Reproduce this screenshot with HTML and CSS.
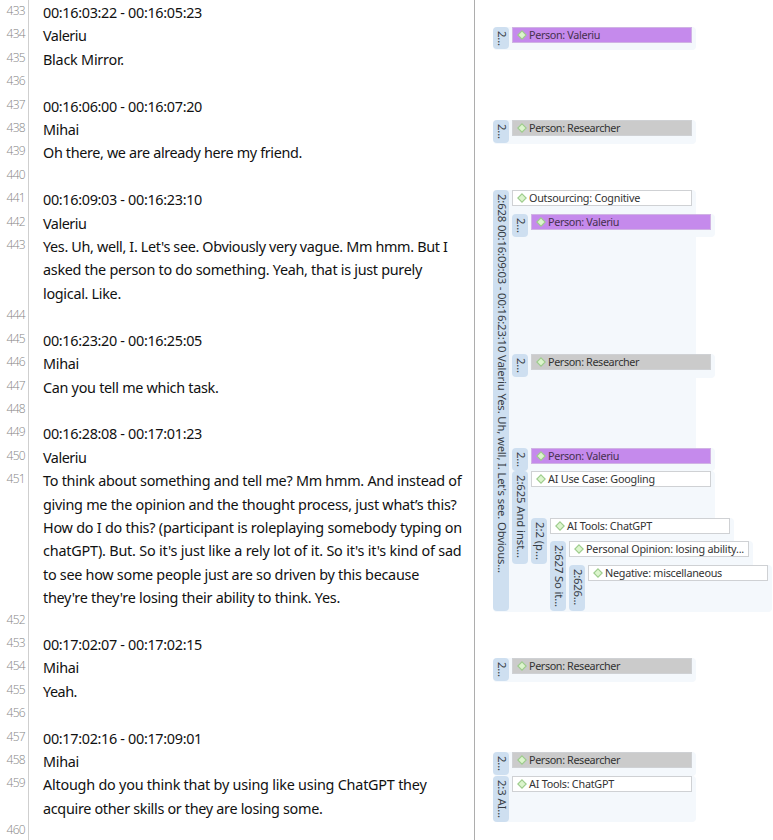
FILE: index.html
```html
<!DOCTYPE html>
<html lang="en">
<head>
<meta charset="utf-8">
<title>Transcript</title>
<link rel="stylesheet" href="styles.css">
</head>
<body>
<main class="document">
  <section class="transcript" id="transcript"></section>
  <aside class="margin" id="margin"></aside>
</main>
<script src="app.js"></script>
</body>
</html>
```
FILE: styles.css
```css
* { box-sizing: border-box; }
body {
  margin: 0;
  background: #fff;
  color: #111;
  font-family: "Noto Sans", "Open Sans", sans-serif;
  overflow: hidden;
}
.document {
  --line: 23.42px;
  display: grid;
  grid-template-columns: 475px 1fr;
  height: 840px;
  overflow: hidden;
}
.transcript {
  border-right: 1px solid #adadad;
  display: flex;
  flex-direction: column;
}
.paragraph {
  display: grid;
  grid-template-columns: 29px 1fr;
  flex: none;
}
.number {
  height: 100%;
  border-right: 1px solid #cfcfcf;
  padding-right: 3px;
  text-align: right;
  color: #868686;
  font-family: "Open Sans", "Noto Sans", sans-serif;
  font-weight: 300;
  font-size: 12px;
  line-height: 22.6px;
}
.text {
  padding-left: 14px;
  font-size: 14.4px;
}
.line {
  height: var(--line);
  line-height: 25.4px;
  white-space: nowrap;
}
.paragraph:last-child { height: 21px; }
.margin {
  display: grid;
  grid-template-rows: repeat(36, var(--line));
  grid-template-columns: 1fr;
  padding: 3.1px 0 0 18px;
}
.quote {
  grid-column: 1;
  display: flex;
  gap: 3px;
  width: 203px;
  background: #f4f8fc;
  border-radius: 4px;
}
.level-1 { margin-left: 19px; }
.level-2 { margin-left: 38px; }
.level-3 { margin-left: 57px; }
.level-4 { margin-left: 76px; }
.chip {
  width: 16px;
  height: calc(100% - 0.6px);
  border-radius: 4px;
  background: #cedff0;
  padding-top: 4px;
  writing-mode: vertical-rl;
  font-size: 11.3px;
  line-height: 14px;
  white-space: nowrap;
  color: #363c44;
}
.tag {
  display: flex;
  align-items: center;
  width: 180px;
  height: 16px;
  padding-left: 4px;
  border: 1px solid #cfd1d4;
  background: #fff;
  color: #333;
  font-size: 10.8px;
  line-height: 14px;
  white-space: nowrap;
}
.tag.valeriu { background: #c58aec; border-color: #d0b3e4; color: #46314f; }
.tag.researcher { background: #cbcbcb; }
.tag svg { width: 10px; height: 10px; margin-right: 2px; flex: none; }
```
FILE: app.js
```js
// Each paragraph: lines of [text, set width in px]
const paragraphs = [
  [["00:16:03:22 - 00:16:05:23", 159]],
  [["Valeriu", 43.5]],
  [["Black Mirror.", 81]],
  [],
  [["00:16:06:00 - 00:16:07:20", 159]],
  [["Mihai", 36]],
  [["Oh there, we are already here my friend.", 259]],
  [],
  [["00:16:09:03 - 00:16:23:10", 159]],
  [["Valeriu", 43.5]],
  [["Yes. Uh, well, I. Let's see. Obviously very vague. Mm hmm. But I", 404.5],
   ["asked the person to do something. Yeah, that is just purely", 379],
   ["logical. Like.", 78]],
  [],
  [["00:16:23:20 - 00:16:25:05", 159]],
  [["Mihai", 36]],
  [["Can you tell me which task.", 175.5]],
  [],
  [["00:16:28:08 - 00:17:01:23", 159]],
  [["Valeriu", 43.5]],
  [["To think about something and tell me? Mm hmm. And instead of", 418.5],
   ["giving me the opinion and the thought process, just what’s this?", 413.5],
   ["How do I do this? (participant is roleplaying somebody typing on", 419],
   ["chatGPT). But. So it's just like a rely lot of it. So it's it's kind of sad", 418.5],
   ["to see how some people just are so driven by this because", 376],
   ["they're they're losing their ability to think. Yes.", 297]],
  [],
  [["00:17:02:07 - 00:17:02:15", 159]],
  [["Mihai", 36]],
  [["Yeah.", 34]],
  [],
  [["00:17:02:16 - 00:17:09:01", 159]],
  [["Mihai", 36]],
  [["Altough do you think that by using like using ChatGPT they", 383.5],
   ["acquire other skills or they are losing some.", 279.5]],
  []
];

// Margin quotations: row, span, level, chip text and length, code, code width, kind
const quotes = [
  [2, 1, 0, "2...", 15, "Person: Valeriu", 71, "valeriu"],
  [6, 1, 0, "2...", 15, "Person: Researcher", 91, "researcher"],
  [9, 18, 0, "2:628 00:16:09:03 - 00:16:23:10 Valeriu Yes. Uh, well, I. Let's see. Obvious...", 379, "Outsourcing: Cognitive", 111, ""],
  [10, 1, 1, "2...", 15, "Person: Valeriu", 71, "valeriu"],
  [16, 1, 1, "2...", 15, "Person: Researcher", 91, "researcher"],
  [20, 1, 1, "2...", 15, "Person: Valeriu", 71, "valeriu"],
  [21, 4, 1, "2:625 And inst...", 83, "AI Use Case: Googling", 107, ""],
  [23, 2, 2, "2:2 (p...", 38, "AI Tools: ChatGPT", 85, ""],
  [24, 3, 3, "2:627 So it...", 62, "Personal Opinion: losing ability...", 158, ""],
  [25, 2, 4, "2:626...", 36, "Negative: miscellaneous", 117, ""],
  [29, 1, 0, "2...", 15, "Person: Researcher", 91, "researcher"],
  [33, 1, 0, "2...", 15, "Person: Researcher", 91, "researcher"],
  [34, 2, 0, "2:3 AI...", 38, "AI Tools: ChatGPT", 85, ""]
];

const diamond = '<svg viewBox="0 0 10 10"><path d="M5 .8 9.2 5 5 9.2.8 5Z" fill="#dcf5cd" stroke="#9dcc8c" stroke-width="1.1"/></svg>';
const label = (text, width) => `<span data-w="${width}">${text}</span>`;

document.getElementById("transcript").innerHTML = paragraphs.map((lines, i) =>
  `<div class="paragraph"><div class="number">${label(433 + i, 18.5)}</div><div class="text">` +
  (lines.length ? lines : [["", 0]]).map(([t, w]) => `<div class="line">${t ? label(t, w) : ""}</div>`).join("") +
  "</div></div>").join("");

document.getElementById("margin").innerHTML = quotes.map(([row, span, level, chip, len, code, w, kind]) =>
  `<div class="quote level-${level}" style="grid-row:${row} / span ${span}">` +
  `<div class="chip">${label(chip, len)}</div>` +
  `<div class="tag ${kind}">${diamond}${label(code, w)}</div></div>`).join("");

// Track each label to its set width
document.querySelectorAll("[data-w]").forEach(el => {
  const box = el.getBoundingClientRect();
  const size = el.closest(".chip") ? box.height : box.width;
  el.style.letterSpacing = (el.dataset.w - size) / el.textContent.length + "px";
});
```
